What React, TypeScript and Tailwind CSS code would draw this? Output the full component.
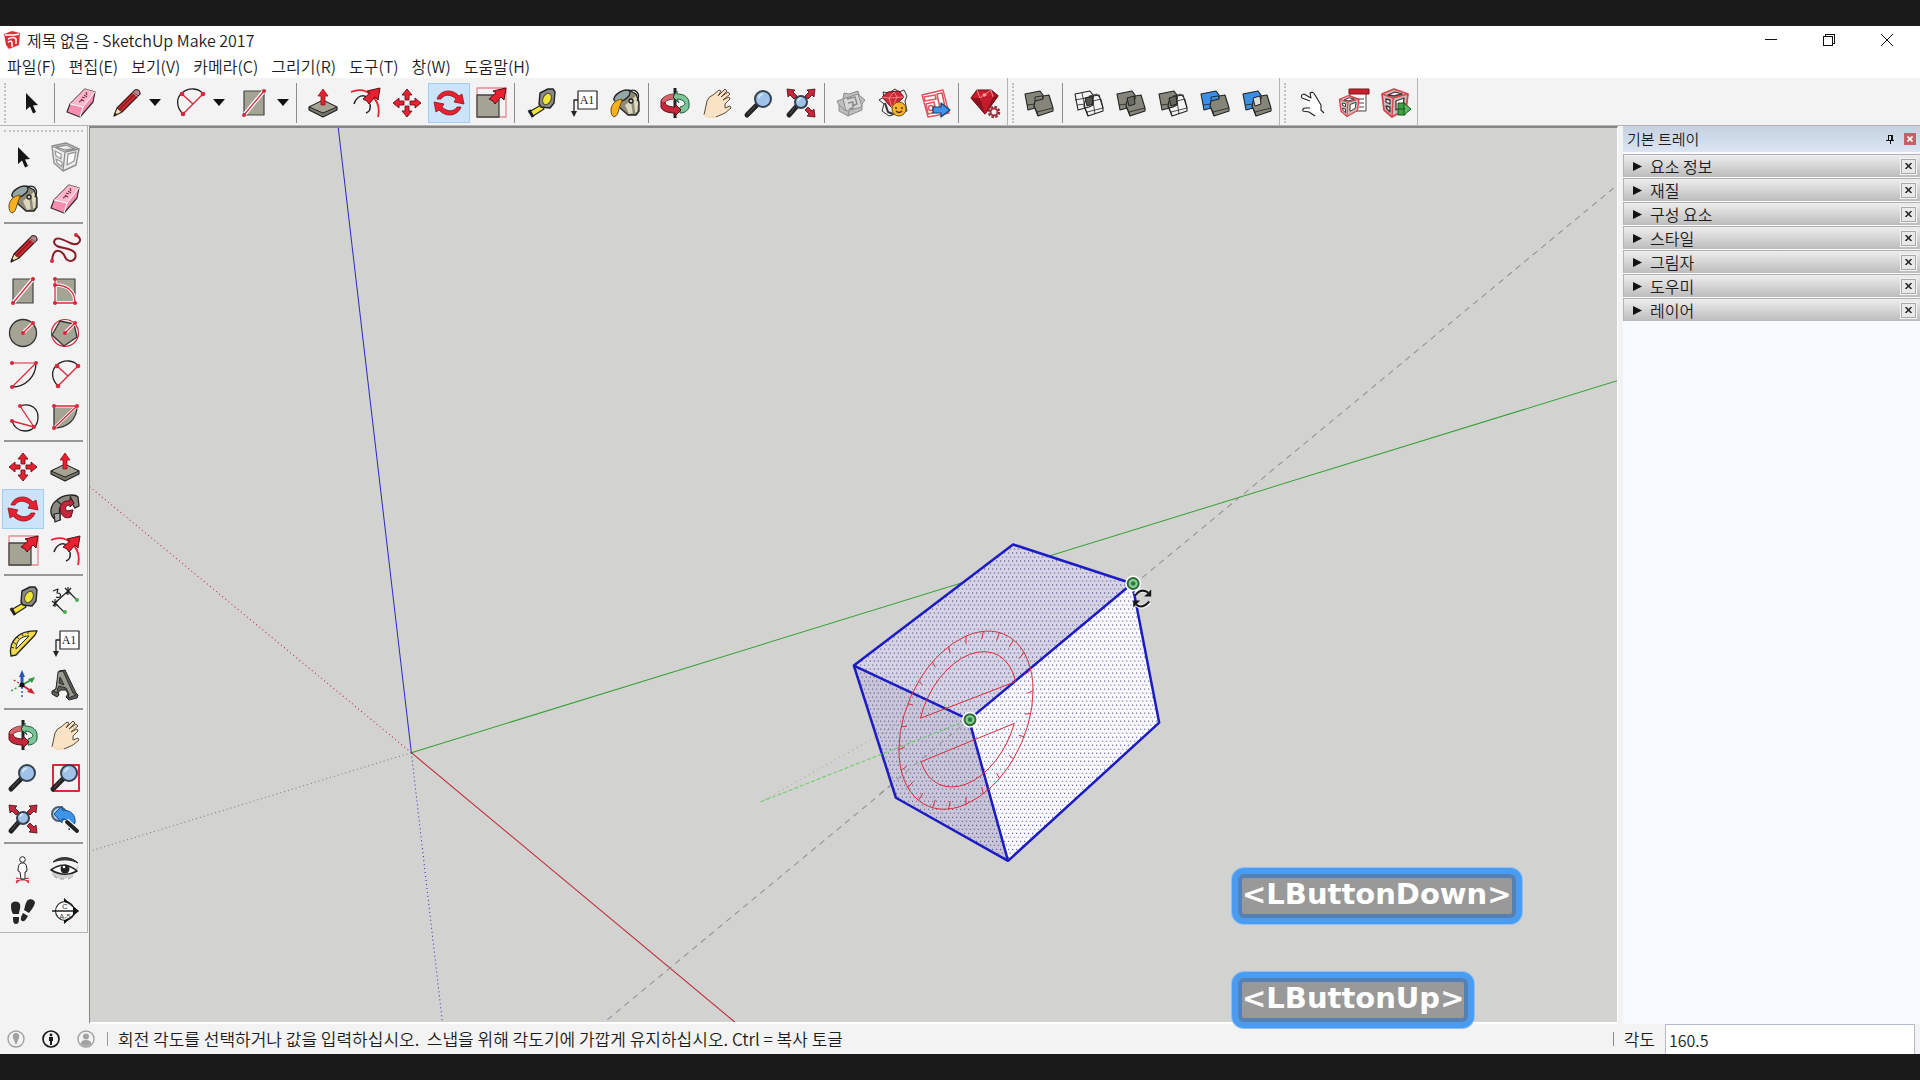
import { ReactNode, useState } from 'react'

const RED = '#e8202f'
const DARK_RED = '#c4283a'
const STONE = '#a5a494'
const INK = '#222222'

interface Tool {
  name: string
  icon: ReactNode
}

const Dot = ({ x, y, r = 2 }: { x: number; y: number; r?: number }) => (
  <circle cx={x} cy={y} r={r} fill="#d8283c" />
)

const Icon = ({ children }: { children: ReactNode }) => (
  <svg viewBox="0 0 32 32" className="size-8 shrink-0" fill="none" strokeLinejoin="round" aria-hidden="true">
    {children}
  </svg>
)

const Lens = ({ x = 20, y = 12, r = 8 }: { x?: number; y?: number; r?: number }) => (
  <>
    <path d={`M${x - r * 0.7} ${y + r * 0.7}L4 28`} stroke={INK} strokeWidth="5" strokeLinecap="round" />
    <path d={`M${x - r * 0.7 - 2} ${y + r * 0.7 + 1}L5 27`} stroke="#555" strokeWidth="1" />
    <circle cx={x} cy={y} r={r} fill="#9fc3e8" stroke="#34404e" strokeWidth="2" />
    <path d={`M${x - r * 0.5} ${y - 1}a${r * 0.6} ${r * 0.6} 0 0 1 ${r * 0.5} ${-r * 0.5}`} stroke="#d8eafa" strokeWidth="1.5" />
  </>
)

// Fat red arrow used by scale and offset
const FatArrow = () => (
  <path d="M31 1L29 13L26 10L20 17L18 14L14 12L21 6L18 4Z" fill={RED} stroke="#5a0d14" strokeWidth="1" />
)

const Cursor = () => (
  <Icon>
    <path d="M11 6V23L15 19.5L18 26.5L21 25L18 18.5L23 18Z" fill="#161616" />
  </Icon>
)

const Eraser = () => (
  <Icon>
    <path d="M5 17L20 2L30 5L28 15L15 30L2 25Z" fill="#f58fb0" stroke="#3a2a30" strokeWidth="1.2" />
    <path d="M5 17L20 2L30 5L18 20Z" fill="#fbb9cb" />
    <path d="M5 17L18 20L30 5M18 20L15 30" stroke="#fff" strokeWidth="1" />
    <path d="M14 15l3-2M16 12l3 2M17 10l3 1M19 8l3 2M21 5l1 3" stroke="#7d3349" strokeWidth="1.2" />
  </Icon>
)

const Pencil = () => (
  <Icon>
    <path d="M4 29L7 21L25 3Q30 2 30 7L12 25Z" fill="#cf2b33" stroke="#3a1a1a" strokeWidth="1.1" />
    <path d="M4 29L7 21L12 25Z" fill="#f0dcae" stroke="#3a2a1a" strokeWidth="1" />
    <path d="M4 29L5 26L7 27Z" fill="#111" />
    <path d="M9 23L26 6" stroke="#8c1820" strokeWidth="1.5" />
    <path d="M23 5L28 9" stroke="#ddd" strokeWidth="2" />
    <path d="M25 3Q30 2 30 7L28 9L23 5Z" fill="#b98a90" stroke="#3a1a1a" strokeWidth="0.8" />
  </Icon>
)

const TwoPointArc = () => (
  <Icon>
    <path d="M9 27C2 20 2 11 8 6C15 0 25 1 29 7" stroke={INK} strokeWidth="1.3" />
    <path d="M9 27L29 7M8 7L19 17" stroke="#d8283c" strokeWidth="1.4" />
    <Dot x={9} y={27} r={2.3} />
    <Dot x={8} y={7} r={2.3} />
    <Dot x={29} y={7} r={2.3} />
  </Icon>
)

const Rectangle = () => (
  <Icon>
    <path d="M6 4H26V28H6Z" fill={STONE} stroke="#444" strokeWidth="1.2" />
    <path d="M6 28L26 4" stroke="#fff" strokeWidth="4" />
    <path d="M6 28L26 4" stroke="#d8283c" strokeWidth="1.3" />
    <Dot x={6} y={28} />
    <Dot x={26} y={4} />
  </Icon>
)

const PushPull = () => (
  <Icon>
    <path d="M2 20L16 14L30 20V23L16 30L2 23Z" fill="#77776b" stroke={INK} strokeWidth="1.2" />
    <path d="M2 20L16 13L30 20L16 26Z" fill={STONE} stroke={INK} strokeWidth="1" />
    <path d="M16 2L21 9H18V18H14V9H11Z" fill={RED} stroke="#8a1420" strokeWidth="0.8" />
  </Icon>
)

const Offset = () => (
  <Icon>
    <path d="M2 5C18 -2 33 13 29 30" stroke={RED} strokeWidth="1.8" />
    <path d="M5 17C8 8 15 7 19 11M21 17C22 22 20 25 17 26" stroke={INK} strokeWidth="1.5" />
    <FatArrow />
  </Icon>
)

const Move = () => (
  <Icon>
    <g fill={RED} stroke="#6f0f18" strokeWidth="0.9">
      {[0, 90, 180, 270].map((a) => (
        <path key={a} transform={`rotate(${a} 16 16)`} d="M16 2L21 8H18V13H14V8H11Z" />
      ))}
    </g>
  </Icon>
)

const Rotate = () => (
  <Icon>
    <g fill={RED} stroke="#8a1420" strokeWidth="0.8">
      <path d="M4 12C7 3 19 1 26 9L29 7L31 17L21 15L23 12C18 7 11 7 8 12Z" />
      <path d="M28 20C25 29 13 31 6 23L3 25L1 15L11 17L9 20C14 25 21 25 24 20Z" />
    </g>
  </Icon>
)

const Scale = () => (
  <Icon>
    <path d="M2 1H31V30H2Z" stroke="#e58b93" strokeWidth="1.3" />
    <path d="M2 8H24V30H2Z" fill={STONE} stroke="#444" strokeWidth="1.3" />
    <FatArrow />
  </Icon>
)

const Tape = () => (
  <Icon>
    <path d="M4 25L16 18L19 22L8 29Z" fill="#f4e637" stroke={INK} strokeWidth="1.2" />
    <path d="M4 23L8 30" stroke={INK} strokeWidth="3" />
    <path d="M15 6L23 2H28L30 5L29 16L25 21L16 20L14 17Z" fill="#8a8a8a" stroke={INK} strokeWidth="1.4" />
    <ellipse cx="22" cy="12" rx="4" ry="6" transform="rotate(25 22 12)" fill="#f4e637" stroke="#4d4d30" />
  </Icon>
)

const TextTool = () => (
  <Icon>
    <path d="M11 4H30V22H11Z" fill="#fff" stroke={INK} strokeWidth="1.2" />
    <path d="M11 13H7V27" stroke={INK} strokeWidth="1.3" />
    <path d="M4 24H10L7 30Z" fill={INK} />
    <text x="20" y="17" textAnchor="middle" fill={INK} className="font-['Liberation_Serif',serif] text-[12px]">A1</text>
  </Icon>
)

const Paint = () => (
  <Icon>
    <path d="M8 9L20 3L27 7L30 15V24L27 28L19 28L10 20Z" fill="#8f8b7a" stroke={INK} strokeWidth="1.3" />
    <path d="M16 18L27 9L29 16L28 25L20 27Z" fill="#ddd7bd" />
    <path d="M23 12L25 26" stroke="#8f8b7a" strokeWidth="2.5" />
    <ellipse cx="13" cy="9" rx="9" ry="4.500" transform="rotate(-30 13 9)" fill="#93a8a6" stroke={INK} strokeWidth="1.4" />
    <path d="M20 4C27 1 32 7 28 14" stroke={INK} strokeWidth="1.3" />
    <circle cx="22" cy="14" r="2" fill="#ccc" stroke={INK} strokeWidth="1.3" />
    <path d="M2 23C2 18 6 13 13 12C13 15 11 18 10 22C9 26 8 29 5 30C3 29 2 27 2 23Z" fill="#f9b01e" stroke="#6d4b10" strokeWidth="1" />
  </Icon>
)

const Orbit = () => (
  <Icon>
    <path d="M16 1V31" stroke={INK} strokeWidth="3" />
    <path d="M18 7C26 7 30 11 30 16V20C29 24 25 26 21 26V20C24 19 26 18 26 16C25 14 22 12 18 12L20 16L14 10L18 4Z" fill="#7cc598" stroke="#1f5a38" strokeWidth="1" />
    <path d="M14 7C7 8 2 11 2 15V20C3 24 9 26 16 26V29L22 23L16 17V20C10 20 6 18 6 15C7 14 10 12 14 12Z" fill={DARK_RED} stroke="#5e1019" strokeWidth="1" />
    <path d="M14 7C7 8 2 11 3 15L6 15C7 13 10 12 14 12Z" fill="#d7666c" />
  </Icon>
)

const Hand = () => (
  <Icon>
    <path d="M3 28L6 14Q8 9 12 8L18 3L20 4L17 9L24 2L26 4L20 10L27 5L29 7L22 13L28 10L29 12L24 17V21L29 19L30 21L24 26L15 30Q7 31 3 28Z" fill="#fae3c4" stroke="#5b4a3a" strokeWidth="1" />
    <path d="M3 28Q7 31 15 30" stroke="#fae3c4" strokeWidth="2" />
  </Icon>
)

const Zoom = () => (
  <Icon>
    <Lens />
  </Icon>
)

const Extents = () => (
  <Icon>
    <g fill={DARK_RED} stroke="#4c0a10" strokeWidth="0.8">
      <path d="M2 2L10 3L8 5L12 9L9 12L5 8L3 10Z" />
      <path d="M30 2L22 3L24 5L20 9L23 12L27 8L29 10Z" />
      <path d="M30 30L22 29L24 27L20 23L23 20L27 24L29 22Z" />
    </g>
    <Lens x={16} y={15} r={6} />
  </Icon>
)

const ZoomWindow = () => (
  <Icon>
    <path d="M4 4H30V30H4Z" stroke="#d8283c" strokeWidth="2" />
    <Lens />
  </Icon>
)

const Previous = () => (
  <Icon>
    <circle cx="10" cy="11" r="7" fill="#b5cfe8" stroke="#4a6076" strokeWidth="2" />
    <path d="M5 11L13 3V7C22 7 27 12 26 20L20 27C21 19 19 16 13 16V20Z" fill="#3d94ea" stroke="#174a80" strokeWidth="1" />
    <path d="M17 18L28 28" stroke="#fff" strokeWidth="6" />
    <path d="M18 19L28 28" stroke={INK} strokeWidth="4" strokeLinecap="round" />
  </Icon>
)

const Warehouse = () => (
  <Icon>
    <path d="M2 14L8 12L9 6L14 7L23 4L24 8L30 13L27 17V23L13 29L4 24V18Z" fill="#bdbdbd" stroke="#8e8e8e" />
    <path d="M8 12L11 24L27 20L23 7ZM4 18L11 24M13 29L14 24" fill="#d6d6d6" stroke="#8e8e8e" />
    <path d="M12 12L20 10L22 17L17 19M13 16L18 15V21L14 22" stroke="#8a8a8a" strokeWidth="1.5" />
  </Icon>
)

const ExtensionWarehouse = () => (
  <Icon>
    <path d="M2 13L7 10L6 5L12 6L18 2L22 5L27 3L30 9L28 14L30 24L12 29L5 24L7 17Z" fill="#ededed" stroke="#333" />
    <path d="M5 10L11 5L22 4L27 10L15 21Z" fill="#d02a36" stroke="#5e1019" />
    <path d="M5 10L12 11L27 10M12 11L15 21L20 10L17 5L12 11" stroke="#f08f92" strokeWidth="0.9" />
    <path d="M8 16L11 25L16 27" stroke="#333" strokeWidth="2" />
    <circle cx="22" cy="22" r="7" fill="#f8b32b" stroke="#6f4d12" />
    <path d="M18 21H20M24 21H26M19 24Q22 27 25 24" stroke="#4b3308" strokeWidth="1.5" />
  </Icon>
)

const SendLayout = () => (
  <Icon>
    <path d="M3 8L24 3L30 26L9 30Z" fill="#fff" stroke="#e05560" strokeWidth="1.4" />
    <path d="M5 10L16 8L17 12L6 14ZM18 7L23 6L26 20L21 21ZM7 17L15 15L17 25L9 27Z" stroke="#e05560" strokeWidth="1.6" />
    <circle cx="12" cy="21" r="2.5" stroke="#e05560" strokeWidth="1.5" />
    <path d="M14 20H22V16L31 23L22 30V26H14Z" fill="#3d94ea" stroke="#123f70" strokeWidth="1.2" />
  </Icon>
)

const Gem = () => (
  <Icon>
    <path d="M2 11L8 3H22L29 9L16 27Z" fill="#cc1c2c" stroke="#5e1019" strokeWidth="1.1" />
    <path d="M2 11L11 11L29 9L16 27Z" fill="#8f111e" />
    <path d="M11 11L16 27L24 10Z" fill="#c51c2b" />
    <path d="M8 3L11 11L22 3L24 10" stroke="#f28a8e" strokeWidth="1" />
    <path d="M15 6L18 8L15 10L13 8Z" fill="#ff9a9a" />
    <circle cx="25" cy="25" r="4.5" stroke="#8a3039" strokeWidth="3.5" strokeDasharray="2.2 1.3" />
    <circle cx="25" cy="25" r="3.5" fill="#f3f3f3" stroke="#a03540" strokeWidth="2" />
  </Icon>
)

const BACK = 'M2 7L17 4L20 8V18L16 20L5 23Z'
const FRONT = 'M12 14L20 12V9L26 8L30 21V24L15 29L11 19Z'

interface SolidProps {
  back: string
  front: string
  middle?: string
}

const Solid = ({ back, front, middle }: SolidProps) => (
  <Icon>
    <path d={BACK} fill={back} stroke={INK} strokeWidth="1.1" />
    <path d="M4 18L12 17" stroke={INK} strokeWidth="0.8" />
    <path d={FRONT} fill={front} stroke={INK} strokeWidth="1.1" />
    <path d="M14 25L30 21M11 19L14 25L15 29" stroke={INK} strokeWidth="0.8" />
    {middle && <path d="M12 11L19 9L20 17L14 19Z" fill={middle} stroke={INK} strokeWidth="1" />}
    {!middle && <path d="M12 14L12 10L19 9" stroke={INK} strokeWidth="0.9" />}
    {front === 'none' && <path d="M16 9L24 7L26 10M20 14L28 12L30 21M20 14L22 27" stroke={INK} strokeWidth="0.8" />}
    {back === 'none' && <path d="M2 13L18 10M9 6L12 20" stroke={INK} strokeWidth="0.8" />}
  </Icon>
)

const PointHand = () => (
  <Icon>
    <path d="M6 8L14 12L14 6L17 5L21 11L24 18L27 23L22 29L14 24L8 24L7 21L14 21L11 15L5 11Z" fill="#fff" />
    <path d="M14 14L6 11Q4 8 8 7L15 11L14 6Q17 4 19 8L22 13L25 18V23L28 26M19 29L13 25L7 24Q6 21 10 21L14 21" stroke={INK} strokeWidth="1.1" />
  </Icon>
)

const MiniCube = ({ big = false }: { big?: boolean }) => (
  <g transform={big ? 'translate(0 0)' : 'translate(0 7) scale(0.75)'}>
    <path d="M2 7L14 2L28 7L26 22L12 30L4 23Z" fill="#c9bcbc" stroke="#d9444f" strokeWidth="1.8" />
    <path d="M2 7L13 11L28 7M13 11L12 30" stroke="#d9444f" strokeWidth="1.4" />
    <path d="M8 8L15 5L22 7L14 9ZM6 12L10 13L10 17L6 15ZM6 19L10 20V25L7 22ZM16 14L24 11L23 19L16 23Z" fill="#fff" stroke="#4a3033" strokeWidth="1.3" />
  </g>
)

const ComponentOptions = () => (
  <Icon>
    <path d="M12 4H28V24H12Z" fill="#fff" stroke="#444" />
    <path d="M11 2H31V7H11Z" fill="#c8202c" stroke="#7c121a" />
    <path d="M21 12H26M21 16H26M21 20H26" stroke="#444" strokeWidth="1.2" />
    <MiniCube />
  </Icon>
)

const ComponentAttributes = () => (
  <Icon>
    <MiniCube big />
    <path d="M18 16H25V28H18Z" fill="#43a047" stroke="#155a1c" />
    <path d="M24 16L31 22L24 28Z" fill="#5cb860" stroke="#155a1c" />
    <path d="M18 22H25" stroke="#155a1c" />
  </Icon>
)

const MakeComponent = () => (
  <Icon>
    <path d="M3 5L17 2L30 8L27 24L14 30L5 22Z" fill="#ececec" stroke="#8f8f8f" strokeWidth="1.4" />
    <path d="M3 5L16 11L30 8M16 11L14 30M7 6L17 4L26 8L16 9Z" stroke="#8f8f8f" strokeWidth="1.3" />
    <path d="M6 10L12 13V18L7 15ZM7 18L13 21V26L8 22ZM19 13L27 11L25 20L18 24Z" fill="#fff" stroke="#9a9a9a" strokeWidth="1.3" />
  </Icon>
)

const Freehand = () => (
  <Icon>
    <path d="M3 28C4 12 14 18 16 24C19 31 29 28 26 20C22 13 6 17 5 9C6 2 15 7 21 10C30 14 35 6 27 2" stroke="#8a1c28" strokeWidth="2" />
    <Dot x={3} y={28} />
    <Dot x={27} y={2} />
  </Icon>
)

const RotatedRectangle = () => (
  <Icon>
    <path d="M6 4H26V28H6Z" fill={STONE} stroke="#444" strokeWidth="1.2" />
    <path d="M6 4V28H26C26 16 18 10 6 10" stroke="#fff" strokeWidth="3.5" />
    <path d="M6 4V28H26C26 16 18 10 6 10" stroke="#d8283c" strokeWidth="1.3" />
    <Dot x={6} y={4} />
    <Dot x={6} y={10} />
    <Dot x={6} y={28} />
    <Dot x={26} y={28} />
  </Icon>
)

const Circle = () => (
  <Icon>
    <circle cx="16" cy="16" r="13.5" fill={STONE} stroke="#333" strokeWidth="1.3" />
    <path d="M16 16L26 6" stroke="#fff" strokeWidth="3.5" />
    <path d="M16 16L26 6" stroke="#d8283c" strokeWidth="1.4" />
    <Dot x={16} y={16} />
    <Dot x={26} y={6} />
  </Icon>
)

const Polygon = () => (
  <Icon>
    <circle cx="16" cy="16" r="13.5" stroke="#d8283c" strokeWidth="1.2" />
    <path d="M11 4L25 7L28 20L15 29L3 18Z" fill={STONE} stroke="#333" strokeWidth="1.3" />
    <path d="M16 16L26 6" stroke="#fff" strokeWidth="3.5" />
    <path d="M16 16L26 6" stroke="#d8283c" strokeWidth="1.4" />
    <Dot x={16} y={16} />
    <Dot x={26} y={6} />
  </Icon>
)

const Arc = () => (
  <Icon>
    <path d="M29 4C29 18 18 28 5 28" stroke={INK} strokeWidth="1.3" />
    <path d="M5 28L29 4H5" stroke="#d8283c" strokeWidth="1.2" />
    <Dot x={5} y={4} />
    <Dot x={29} y={4} />
    <Dot x={5} y={28} />
  </Icon>
)

const ThreePointArc = () => (
  <Icon>
    <path d="M13 5C24 1 31 8 31 16C31 24 26 30 18 30C12 30 7 26 5 20" stroke={INK} strokeWidth="1.3" />
    <path d="M13 5L27 26L5 20" stroke="#d8283c" strokeWidth="1.3" />
    <Dot x={13} y={5} />
    <Dot x={27} y={26} />
    <Dot x={5} y={20} />
  </Icon>
)

const Pie = () => (
  <Icon>
    <path d="M5 5H28C28 19 18 27 5 27Z" fill={STONE} stroke="#333" strokeWidth="1.3" />
    <path d="M5 5H28L5 27" stroke="#fff" strokeWidth="3" />
    <path d="M5 5H28L5 27" stroke="#d8283c" strokeWidth="1.3" />
    <Dot x={5} y={5} />
    <Dot x={28} y={5} />
    <Dot x={5} y={27} />
  </Icon>
)

const FollowMe = () => (
  <Icon>
    <path d="M11 27C0 27 -1 14 8 7C15 1 26 1 29 4L30 13L26 15L22 9C13 9 9 15 11 20Z" fill="#8b8a80" stroke={INK} strokeWidth="1.3" />
    <path d="M5 21L11 20L11 27L6 29ZM21 3L25 11M8 8L13 12" fill="#aaa" stroke={INK} strokeWidth="1.2" />
    <path d="M12 20C9 12 14 7 21 8V5L25 10L21 14V12C17 12 15 15 18 18L24 17L22 24C17 26 14 24 12 20Z" fill={DARK_RED} stroke="#5e1019" />
  </Icon>
)

const Dimension = () => (
  <Icon>
    <path d="M6 18L19 6M6 18L16 28M19 6L28 15" stroke={INK} strokeWidth="1.1" />
    <path d="M3 16L9 21M4 21L9 15M6 14V22M16 3L22 9M17 9L22 3M19 2V10" stroke={INK} strokeWidth="1.2" />
    <path d="M4 6L9 4L8 8Q13 8 11 12Q9 13 7 12" stroke={INK} strokeWidth="1.2" />
    <circle cx="28" cy="15" r="2" fill="#4caf50" />
    <circle cx="16" cy="27" r="2" fill="#4caf50" />
  </Icon>
)

const ProtractorTool = () => (
  <Icon>
    <path d="M4 29C1 14 12 3 30 4L28 8L9 28Z" fill="#f0d94c" stroke={INK} strokeWidth="1.3" />
    <path d="M9 22C9 14 14 9 22 9Z" fill="#f3f3f3" stroke={INK} strokeWidth="1" />
    <path d="M4 20L7 21M6 15L9 17M10 10L12 12M15 7L16 9M21 5V7" stroke={INK} strokeWidth="0.9" />
  </Icon>
)

const AxesTool = () => (
  <Icon>
    <path d="M15 16V6" stroke="#2855b0" strokeWidth="3" />
    <path d="M15 1L18 8H12Z" fill="#2855b0" />
    <path d="M15 18V30" stroke="#2855b0" strokeWidth="1.4" strokeDasharray="2 2" />
    <path d="M15 16L24 11" stroke="#2f9a45" strokeWidth="2" />
    <path d="M28 8L25 14L21 10Z" fill="#2f9a45" />
    <path d="M13 17L4 22" stroke="#2f9a45" strokeWidth="1.4" strokeDasharray="2 2" />
    <path d="M15 16L24 22" stroke="#c9222e" strokeWidth="2" />
    <path d="M28 25L20 23L24 19Z" fill="#c9222e" />
    <path d="M12 14L5 10" stroke="#c9222e" strokeWidth="1.4" strokeDasharray="2 2" />
    <circle cx="15" cy="16" r="2.5" fill="#111" />
  </Icon>
)

const Text3D = () => (
  <Icon>
    <path d="M10 2L16 1L27 24L29 26L28 29L20 31L17 28L19 25L17 21H12L9 23L10 26L8 28L3 25V22L7 20Z" fill="#5f5f58" stroke={INK} strokeWidth="1" />
    <path d="M9 3L14 2L24 24L27 26L19 29L20 25L17 19L10 17L8 21L10 24L4 22L7 20ZM11 8L10 14L15 16Z" fill="#9a9a90" fillRule="evenodd" stroke={INK} strokeWidth="0.9" />
  </Icon>
)

const PositionCamera = () => (
  <Icon>
    <path d="M16 24L9 30M16 24L22 30M9 25L22 28M22 25L9 28" stroke="#d8283c" strokeWidth="1.2" />
    <path d="M14 10Q11 11 11 18L13 19L14 26H18L18 19L20 18Q20 11 17 10Z" fill="#fff" stroke={INK} strokeWidth="1" />
    <circle cx="15.5" cy="6.5" r="2.8" fill="#fff" stroke={INK} />
  </Icon>
)

const LookAround = () => (
  <Icon>
    <path d="M3 22Q14 31 28 19L30 12L24 18Q13 24 3 18Z" fill="#cfcfcf" />
    <path d="M4 9C10 3 22 3 29 10C22 6 12 6 4 9Z" fill="#444" stroke={INK} />
    <path d="M2 17Q15 7 28 18Q16 25 2 17Z" fill="#fff" stroke={INK} strokeWidth="1.6" />
    <circle cx="16" cy="16" r="4.5" fill={INK} />
    <circle cx="15" cy="14" r="1.3" fill="#fff" />
    <path d="M5 23L8 25M11 26H15M19 26L24 23" stroke="#999" />
  </Icon>
)

const Walk = () => (
  <Icon>
    <g fill="#262626">
      <path d="M4 10C4 6 11 5 13 9C14 13 12 16 12 19L6 19C4 16 4 13 4 10Z" />
      <path d="M6 22L12 22C12 26 12 29 9 29C6 29 6 26 6 22Z" />
      <path d="M20 6C22 3 28 4 28 8C27 12 24 15 22 18L17 15C18 12 18 9 20 6Z" />
      <path d="M16 18L21 21C19 24 18 27 15 26C13 25 14 21 16 18Z" />
    </g>
  </Icon>
)

const Section = () => (
  <Icon>
    <circle cx="16" cy="16" r="9.5" fill="#fff" stroke={INK} strokeWidth="1.1" />
    <path d="M15 4L29 16L15 28" stroke={INK} strokeWidth="1.1" />
    <path d="M15 3L21 9L15 7ZM15 29L21 23L15 25ZM24 12L30 16L24 20Z" fill="#111" />
    <path d="M3 16H29" stroke="#111" strokeWidth="1.4" />
    <text x="16" y="14" textAnchor="middle" fill="#333" className="font-['Liberation_Sans',sans-serif] text-[8px]">C</text>
    <text x="16" y="24" textAnchor="middle" fill="#333" className="font-['Liberation_Sans',sans-serif] text-[7px]">A-5</text>
  </Icon>
)

const drawTools = [
  { name: 'Line', icon: <Pencil /> },
  { name: 'Arc', icon: <TwoPointArc /> },
  { name: 'Rectangle', icon: <Rectangle /> },
]

const topGroups: Tool[][] = [
  [
    { name: 'Push/Pull', icon: <PushPull /> },
    { name: 'Offset', icon: <Offset /> },
    { name: 'Move', icon: <Move /> },
    { name: 'Rotate', icon: <Rotate /> },
    { name: 'Scale', icon: <Scale /> },
  ],
  [
    { name: 'Tape Measure', icon: <Tape /> },
    { name: 'Text', icon: <TextTool /> },
    { name: 'Paint Bucket', icon: <Paint /> },
  ],
  [
    { name: 'Orbit', icon: <Orbit /> },
    { name: 'Pan', icon: <Hand /> },
    { name: 'Zoom', icon: <Zoom /> },
    { name: 'Zoom Extents', icon: <Extents /> },
  ],
  [
    { name: '3D Warehouse', icon: <Warehouse /> },
    { name: 'Extension Warehouse', icon: <ExtensionWarehouse /> },
    { name: 'Send to LayOut', icon: <SendLayout /> },
  ],
  [{ name: 'Extension Manager', icon: <Gem /> }],
]

const GREY = '#85857a'
const BLUE = '#3b8fe6'

const solidTools: Tool[] = [
  { name: 'Intersect', icon: <Solid back="none" front="none" middle="#55554d" /> },
  { name: 'Union', icon: <Solid back={GREY} front={GREY} middle="#6c6c62" /> },
  { name: 'Subtract', icon: <Solid back={GREY} front="none" middle="#66665c" /> },
  { name: 'Trim', icon: <Solid back={BLUE} front={GREY} /> },
  { name: 'Split', icon: <Solid back={BLUE} front={GREY} middle="#dcdcdc" /> },
]

const dynamicTools: Tool[] = [
  { name: 'Interact', icon: <PointHand /> },
  { name: 'Component Options', icon: <ComponentOptions /> },
  { name: 'Component Attributes', icon: <ComponentAttributes /> },
]

const sideGroups: Tool[][] = [
  [
    { name: 'Select', icon: <Cursor /> },
    { name: 'Make Component', icon: <MakeComponent /> },
    { name: 'Paint Bucket', icon: <Paint /> },
    { name: 'Eraser', icon: <Eraser /> },
  ],
  [
    { name: 'Line', icon: <Pencil /> },
    { name: 'Freehand', icon: <Freehand /> },
    { name: 'Rectangle', icon: <Rectangle /> },
    { name: 'Rotated Rectangle', icon: <RotatedRectangle /> },
    { name: 'Circle', icon: <Circle /> },
    { name: 'Polygon', icon: <Polygon /> },
    { name: 'Arc', icon: <Arc /> },
    { name: '2 Point Arc', icon: <TwoPointArc /> },
    { name: '3 Point Arc', icon: <ThreePointArc /> },
    { name: 'Pie', icon: <Pie /> },
  ],
  [
    { name: 'Move', icon: <Move /> },
    { name: 'Push/Pull', icon: <PushPull /> },
    { name: 'Rotate', icon: <Rotate /> },
    { name: 'Follow Me', icon: <FollowMe /> },
    { name: 'Scale', icon: <Scale /> },
    { name: 'Offset', icon: <Offset /> },
  ],
  [
    { name: 'Tape Measure', icon: <Tape /> },
    { name: 'Dimensions', icon: <Dimension /> },
    { name: 'Protractor', icon: <ProtractorTool /> },
    { name: 'Text', icon: <TextTool /> },
    { name: 'Axes', icon: <AxesTool /> },
    { name: '3D Text', icon: <Text3D /> },
  ],
  [
    { name: 'Orbit', icon: <Orbit /> },
    { name: 'Pan', icon: <Hand /> },
    { name: 'Zoom', icon: <Zoom /> },
    { name: 'Zoom Window', icon: <ZoomWindow /> },
    { name: 'Zoom Extents', icon: <Extents /> },
    { name: 'Previous', icon: <Previous /> },
  ],
  [
    { name: 'Position Camera', icon: <PositionCamera /> },
    { name: 'Look Around', icon: <LookAround /> },
    { name: 'Walk', icon: <Walk /> },
    { name: 'Section Plane', icon: <Section /> },
  ],
]

const menus = ['파일(F)', '편집(E)', '보기(V)', '카메라(C)', '그리기(R)', '도구(T)', '창(W)', '도움말(H)']
const trays = ['요소 정보', '재질', '구성 요소', '스타일', '그림자', '도우미', '레이어']

interface ToolButtonProps {
  tool: Tool
  active: string
  onSelect: (name: string) => void
}

const ToolButton = ({ tool, active, onSelect }: ToolButtonProps) => (
  <button
    type="button"
    aria-label={tool.name}
    onClick={() => onSelect(tool.name)}
    className={`flex h-10 w-[42px] items-center justify-center border ${
      active === tool.name ? 'border-[#a3cdf3] bg-[#cce4fa]' : 'border-transparent'
    }`}
  >
    {tool.icon}
  </button>
)

const Separator = () => (
  <div className="w-2 shrink-0 pl-0.5">
    <div className="h-10 w-px bg-[#8c8c8c]" />
  </div>
)

const Handle = () => <div className="mx-1 h-10 w-0 border-l-2 border-dotted border-[#c4c4c4]" />

const TitleBar = () => (
  <header className="bg-white">
    <div className="flex h-7 items-center pl-1">
      <svg viewBox="0 0 17 18" className="h-[18px] w-[17px]" aria-hidden="true">
        <path d="M0 3L8 0L16 2L15 14L5 18L2 14Z" fill="#df2f35" />
        <path d="M1 4L11 4L15 3M4 8Q10 5 12 8V13M4 11Q8 9 8 12V16" fill="none" stroke="#fff" strokeWidth="1.5" />
      </svg>
      <h1 className="ml-1.5 text-[16px] leading-6">제목 없음 - SketchUp Make 2017</h1>
      <div className="ml-auto flex">
        <button type="button" aria-label="최소화" className="flex h-7 w-[58px] items-center justify-center">
          <svg viewBox="0 0 12 12" className="size-3" stroke="#111" shapeRendering="crispEdges"><path d="M0 5.5H12" /></svg>
        </button>
        <button type="button" aria-label="이전 크기로 복원" className="flex h-7 w-[58px] items-center justify-center">
          <svg viewBox="0 0 12 12" className="size-3" fill="none" stroke="#111" shapeRendering="crispEdges">
            <path d="M0.5 2.5H9.5V11.5H0.5ZM2.5 2V0.5H11.5V9.5H10" />
          </svg>
        </button>
        <button type="button" aria-label="닫기" className="mr-1 flex h-7 w-[58px] items-center justify-center">
          <svg viewBox="0 0 12 12" className="size-3" stroke="#111"><path d="M0 0L12 12M12 0L0 12" /></svg>
        </button>
      </div>
    </div>
    <nav className="flex h-6 items-center gap-[13px] pl-[7px] text-[16px] leading-6">
      {menus.map((menu) => (
        <button key={menu} type="button" className="whitespace-nowrap">{menu}</button>
      ))}
    </nav>
  </header>
)

const TopToolbar = ({ active, onSelect }: Omit<ToolButtonProps, 'tool'>) => (
  <div className="flex h-12 shrink-0 border-b border-[#b4b4b4]">
    <div className="flex items-center border-r border-[#b4b4b4] pt-0.5 pr-px">
      <Handle />
      <ToolButton tool={{ name: 'Select', icon: <Cursor /> }} active={active} onSelect={onSelect} />
      <Separator />
      <ToolButton tool={{ name: 'Eraser', icon: <Eraser /> }} active={active} onSelect={onSelect} />
      {drawTools.map((tool) => (
        <div key={tool.name} className="flex">
          <button type="button" aria-label={tool.name} className="flex h-10 w-[47px] items-center justify-center">
            {tool.icon}
          </button>
          <button type="button" aria-label={`${tool.name} menu`} className="flex h-10 w-[17px] items-center">
            <svg viewBox="0 0 12 7" className="h-[7px] w-3" aria-hidden="true"><path d="M0 0H12L6 7Z" fill="#111" /></svg>
          </button>
        </div>
      ))}
      {topGroups.map((group, i) => (
        <div key={i} className="flex">
          <Separator />
          {group.map((tool) => (
            <ToolButton key={tool.name} tool={tool} active={active} onSelect={onSelect} />
          ))}
        </div>
      ))}
    </div>
    <div className="flex items-center border-r border-[#b4b4b4] pt-0.5 pr-px">
      <Handle />
      <ToolButton
        tool={{ name: 'Outer Shell', icon: <Solid back={GREY} front={GREY} /> }}
        active={active}
        onSelect={onSelect}
      />
      <Separator />
      {solidTools.map((tool) => (
        <ToolButton key={tool.name} tool={tool} active={active} onSelect={onSelect} />
      ))}
    </div>
    <div className="flex items-center border-r border-[#b4b4b4] pt-0.5">
      <Handle />
      <div className="flex pl-px">
        {dynamicTools.map((tool) => (
          <ToolButton key={tool.name} tool={tool} active={active} onSelect={onSelect} />
        ))}
      </div>
    </div>
  </div>
)

const SideToolbar = ({ active, onSelect }: Omit<ToolButtonProps, 'tool'>) => (
  <aside className="w-[89px] shrink-0 pr-px">
    <div className="border-r border-b border-[#b4b4b4] pt-1">
      <div className="mx-1 border-t-2 border-dotted border-[#c4c4c4] pb-1" />
      {sideGroups.map((group, i) => (
        <div key={i}>
          {i > 0 && <div className="mx-1 mt-0.5 mb-1 h-0.5 bg-[#979797]" />}
          <div className="grid w-fit grid-cols-2 pl-0.5">
            {group.map((tool) => (
              <div key={tool.name} className="py-px">
                <ToolButton tool={tool} active={active} onSelect={onSelect} />
              </div>
            ))}
          </div>
        </div>
      ))}
    </div>
  </aside>
)

const ticks = Array.from({ length: 24 }, (_, i) => (i * Math.PI) / 12)

const Marker = ({ x, y }: { x: number; y: number }) => (
  <g>
    <circle cx={x} cy={y} r="8" fill="#fff" />
    <circle cx={x} cy={y} r="5.5" fill="#86cf8f" stroke="#2f6b3c" strokeWidth="2" />
    <circle cx={x} cy={y} r="2.3" fill="#2f7a40" />
  </g>
)

const Viewport = () => (
  <svg viewBox="91 128 1527 893" preserveAspectRatio="xMinYMin slice" className="block h-full w-full" fill="none" aria-label="3D view">
    <defs>
      <pattern id="dots" width="4" height="8" patternUnits="userSpaceOnUse">
        <rect width="1" height="1" fill="#2a2a78" />
        <rect x="2" y="4" width="1" height="1" fill="#2a2a78" />
      </pattern>
    </defs>
    <path d="M412 752L1618 380" stroke="#34a034" />
    <path d="M412 752L339 128" stroke="#2a2ac0" />
    <path d="M412 752L735 1021" stroke="#c0202f" />
    <path d="M412 752L89 485" stroke="#b8283a" strokeDasharray="1 3" />
    <path d="M412 752L89 851" stroke="#5f8a5f" strokeDasharray="1 3" />
    <path d="M412 752L443 1021" stroke="#2a2ac0" strokeDasharray="1 3" />
    <path d="M1613 188L605 1021" stroke="#8f8f8f" strokeDasharray="6 5" />

    <path d="M1013 544L1132 583L969 719L854 665Z" fill="#d6d4e4" />
    <path d="M854 665L969 719L1008 860L896 797Z" fill="#c9c6d8" />
    <path d="M1132 583L1159 722L1008 860L969 719Z" fill="#fbfbff" />
    <path d="M1013 544L1132 583L1159 722L1008 860L896 797L854 665Z" fill="url(#dots)" shapeRendering="crispEdges" />
    <path d="M1132 583L969 719" stroke="#9a98a8" strokeDasharray="1 5" />
    <path d="M969 719L880 793" stroke="#9a98a8" strokeDasharray="6 5" />
    <g stroke="#1c1cc4" strokeWidth="2.5" strokeLinejoin="round">
      <path d="M1013 544L1132 583L1159 722L1008 860L896 797L854 665Z" />
      <path d="M854 665L969 719L1132 583M969 719L1008 860" />
    </g>
    <path d="M761 801L969 719" stroke="#62cf62" strokeDasharray="4 2" />
    <path d="M761 801L905 720" stroke="#a0a0a0" strokeDasharray="1 4" />

    <g transform="matrix(67 -29.4 0 84 966 719.5)" stroke="#d8303f">
      <circle r="1" vectorEffect="non-scaling-stroke" />
      <path d="M-0.68 -0.26A0.74 0.74 0 0 1 0.74 -0.2Z" vectorEffect="non-scaling-stroke" />
      <path d="M-0.67 0.26A0.74 0.74 0 0 0 0.72 0.29Z" vectorEffect="non-scaling-stroke" />
      {ticks.map((a) => (
        <path
          key={a}
          d={`M${Math.cos(a)} ${Math.sin(a)}L${Math.cos(a) * 0.91} ${Math.sin(a) * 0.91}`}
          vectorEffect="non-scaling-stroke"
        />
      ))}
    </g>
    <Marker x={970} y={719} />
    <Marker x={1133} y={583} />
    <g stroke="#f4f4f4" strokeWidth="4">
      <path d="M1135 594Q1141 587 1148 592M1149 602Q1142 609 1136 604" />
    </g>
    <g stroke="#161616" strokeWidth="2">
      <path d="M1135 595Q1141 587 1148 592M1149 601Q1142 609 1136 604" />
      <path d="M1151 589V596H1144ZM1133 607V600H1140Z" fill="#161616" stroke="none" />
    </g>
  </svg>
)

const Tray = () => (
  <aside className="ml-[5px] w-[297px] shrink-0 bg-[#f7faff]">
    <div className="flex h-[26px] items-center bg-linear-to-b from-[#c5d1de] to-[#dbe5f4] pr-1 pl-1 text-[15px] leading-6">
      <h2>기본 트레이</h2>
      <button type="button" aria-label="자동 숨기기" className="mr-2.5 ml-auto">
        <svg viewBox="0 0 8 9" className="h-[9px] w-2" fill="none" stroke="#111" shapeRendering="crispEdges">
          <path d="M2 5V0.5H5.5V5M0 5.5H8M4 6V9" />
          <path d="M5.5 0V5" strokeWidth="2" />
        </svg>
      </button>
      <button type="button" aria-label="트레이 닫기" className="flex size-3 items-center justify-center bg-[#c75f66]">
        <svg viewBox="0 0 6 6" className="size-1.5" stroke="#fff" strokeWidth="1.6"><path d="M0.5 0.5L5.5 5.5M5.5 0.5L0.5 5.5" /></svg>
      </button>
    </div>
    <ul className="flex flex-col gap-px pt-0.5">
      {trays.map((tray) => (
        <li
          key={tray}
          className="flex h-[23px] items-center border-t border-l border-[#b2b2b2] bg-linear-to-b from-[#eeeeee] to-[#bcbcbc] pr-[3px] text-[16px] leading-5"
        >
          <button type="button" className="flex flex-1 items-center pl-[9px]">
            <svg viewBox="0 0 9 9" className="mr-2 size-[9px]" aria-hidden="true"><path d="M0 0L9 4.5L0 9Z" fill="#111" /></svg>
            {tray}
          </button>
          <button type="button" aria-label={`${tray} 닫기`} className="flex size-[17px] items-center justify-center border border-[#f5f5f5] bg-[#e9e9e9] outline outline-[#a8a8a8] -outline-offset-2">
            <svg viewBox="0 0 7 6" className="h-1.5 w-[7px]" stroke="#222" strokeWidth="1.5"><path d="M0.5 0L6.5 6M6.5 0L0.5 6" /></svg>
          </button>
        </li>
      ))}
    </ul>
  </aside>
)

const StatusBar = () => {
  const [angle, setAngle] = useState('160.5')

  return (
    <footer className="flex h-[30px] shrink-0 items-center text-[17px]">
      <svg viewBox="0 0 92 18" className="ml-[7px] h-[18px] w-[92px]" fill="none" aria-hidden="true">
        <circle cx="9" cy="9" r="8" stroke="#a2a2a2" strokeWidth="1.4" />
        <path d="M9 15L6 8Q5 3 9 3T12 8Z" fill="#a2a2a2" />
        <circle cx="44" cy="9" r="8" stroke="#1b1b1b" strokeWidth="1.7" />
        <path d="M42 7H46V11H45V15H43V11H42Z" fill="#1b1b1b" />
        <circle cx="44" cy="5" r="1.4" fill="#1b1b1b" />
        <circle cx="79" cy="9" r="8" stroke="#a2a2a2" strokeWidth="1.4" />
        <circle cx="79" cy="6.5" r="3" fill="#a2a2a2" />
        <path d="M73.5 14Q74 10 79 10T84.5 14Q79 18 73.5 14Z" fill="#a2a2a2" />
      </svg>
      <div className="mr-2.5 ml-2 h-3.5 w-px bg-[#9a9a9a]" />
      <p className="whitespace-pre">{'회전 각도를 선택하거나 값을 입력하십시오.  스냅을 위해 각도기에 가깝게 유지하십시오. Ctrl = 복사 토글'}</p>
      <div className="mr-2.5 ml-auto h-3.5 w-px bg-[#8a8a8a]" />
      <label htmlFor="angle">각도</label>
      <input
        id="angle"
        value={angle}
        onChange={(e) => setAngle(e.target.value)}
        className="mr-[5px] ml-2.5 h-full w-[250px] border border-b-0 border-[#b4bccb] bg-white px-[3px] text-[16px] outline-none"
      />
    </footer>
  )
}

const KeyBadge = ({ label }: { label: string }) => (
  <div className="w-fit rounded-xl border-6 border-[#4a9cf3] bg-[#999999] shadow-[0_0_0_1px_#8fc0f0]">
    <div className="h-[44px] rounded-md border-4 border-[#5480b3] text-[29px] leading-8 font-bold text-white">
      {label}
    </div>
  </div>
)

const App = () => {
  const [active, setActive] = useState('Rotate')

  return (
    <div className="flex h-screen flex-col border-y-26 border-[#1a1a1a] bg-[#f3f3f3] font-['Noto_Sans_CJK_KR',sans-serif] font-[350] text-[#1c1c1c]">
      <TitleBar />
      <TopToolbar active={active} onSelect={setActive} />
      <main className="flex min-h-0 flex-1">
        <SideToolbar active={active} onSelect={setActive} />
        <section className="relative min-w-0 flex-1 border-t-2 border-r border-b-2 border-l border-t-[#858585] border-r-white border-b-white border-l-[#858585] bg-[#d2d2d0]">
          <Viewport />
          <div className="absolute right-[97px] -bottom-1.5 flex w-[288px] flex-col gap-12 font-['DejaVu_Sans',sans-serif]">
            <KeyBadge label="<LButtonDown>" />
            <KeyBadge label="<LButtonUp>" />
          </div>
        </section>
        <Tray />
      </main>
      <StatusBar />
    </div>
  )
}

export default App
